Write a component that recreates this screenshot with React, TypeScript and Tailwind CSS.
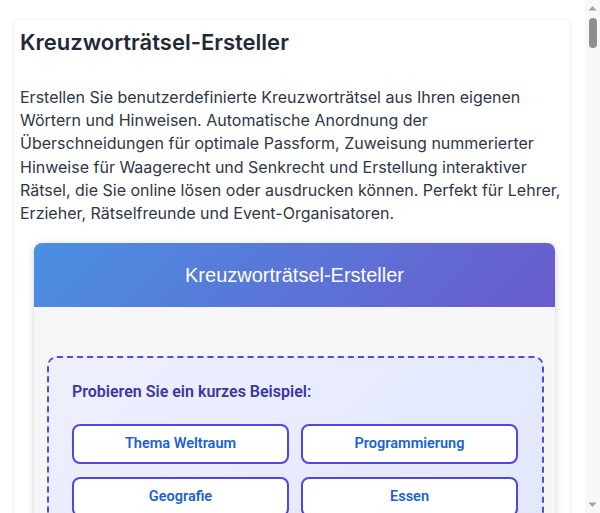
import React from "react";

const examples = ["Thema Weltraum", "Programmierung", "Geografie", "Essen"];

function Scrollbar() {
  return (
    <div className="w-[15px] h-[513px] shrink-0 bg-[#f8f8f8] flex flex-col items-center">
      <svg width="15" height="15" viewBox="0 0 15 15" className="shrink-0">
        <polygon points="3.5,10.5 7.5,6 11.5,10.5" fill="#a3a3a3" />
      </svg>
      <div className="w-[8px] h-[30px] mt-[3px] rounded-full bg-[#8f8f8f]" />
      <div className="flex-1" />
      <svg width="15" height="15" viewBox="0 0 15 15" className="shrink-0">
        <polygon points="3.5,4.5 11.5,4.5 7.5,9" fill="#a3a3a3" />
      </svg>
    </div>
  );
}

export default function App() {
  return (
    <div className="h-[513px] overflow-hidden flex bg-white" style={{ fontFamily: "Inter, 'Noto Sans', sans-serif" }}>
      <div className="w-[585px] shrink-0 pt-[20px]">
        <div className="ml-[14px] w-[556px] bg-white shadow-[0_1px_4px_rgba(0,0,0,0.12)] px-[6px] pt-[7px] pb-[30px]">
          <h1 className="text-[22px] leading-[30px] font-semibold text-[#1f2937] mb-[29px]">Kreuzworträtsel-Ersteller</h1>
          <p className="text-[16px] leading-[23.2px] text-[#2d3748] mb-[18px]">
            Erstellen Sie benutzerdefinierte Kreuzworträtsel aus Ihren eigenen Wörtern und Hinweisen. Automatische Anordnung der Überschneidungen für optimale Passform, Zuweisung nummerierter Hinweise für Waagerecht und Senkrecht und Erstellung interaktiver Rätsel, die Sie online lösen oder ausdrucken können. Perfekt für Lehrer, Erzieher, Rätselfreunde und Event-Organisatoren.
          </p>
          <div className="ml-[14px] w-[521px] rounded-[8px] overflow-hidden shadow-[0_2px_8px_rgba(0,0,0,0.18)] bg-[#f6f6f6]">
            <div className="h-[64px] flex items-center justify-center bg-[linear-gradient(135deg,#4a90e2,#6a5acd)]">
              <span className="text-white text-[20px]" style={{ fontFamily: "'Liberation Sans', Arial, sans-serif" }}>Kreuzworträtsel-Ersteller</span>
            </div>
            <div className="pt-[49px] pl-[13px] pr-[11px] pb-[20px]" style={{ fontFamily: "Roboto, 'Noto Sans', sans-serif" }}>
              <div className="border-2 border-dashed border-[#5a45e6] rounded-[10px] bg-[linear-gradient(135deg,#eef0ff,#e2e7fd)] pl-[23px] pr-[24px] pt-[22px] pb-[24px]">
                <h3 className="text-[16px] leading-[24px] font-semibold text-[#3b36a6] mb-[20px]">Probieren Sie ein kurzes Beispiel:</h3>
                <div className="grid grid-cols-2 gap-x-[12px] gap-y-[13px]">
                  {examples.map((e) => (
                    <button key={e} className="h-[40px] bg-white border-2 border-[#4f46e5] rounded-[8px] text-[14.5px] font-semibold text-[#1a63cf]">
                      {e}
                    </button>
                  ))}
                </div>
              </div>
            </div>
          </div>
        </div>
      </div>
      <Scrollbar />
    </div>
  );
}
